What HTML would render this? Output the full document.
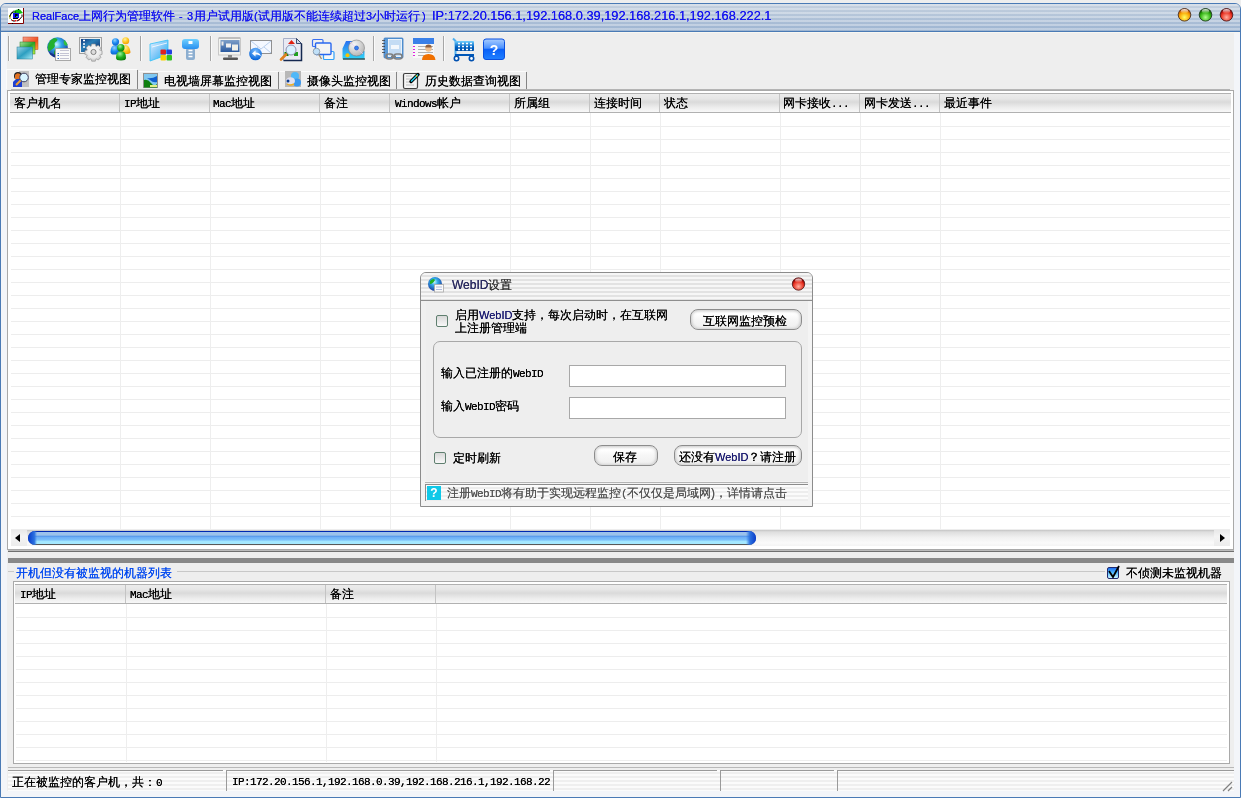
<!DOCTYPE html>
<html><head><meta charset="utf-8">
<style>
*{box-sizing:border-box;margin:0;padding:0}
html,body{width:1241px;height:798px;overflow:hidden;background:#eeeeee;font-family:"Liberation Sans",sans-serif;font-size:12px;color:#000;position:relative}
.a{position:absolute}
.sp{white-space:nowrap}
.mono{font-family:"Liberation Mono",monospace}
/* window */
#wb{left:0;top:3px;width:1241px;height:795px;border:1px solid #4a7ab5;border-radius:6px 6px 0 0;background:#eeeeee}
#title{left:1px;top:4px;width:1239px;height:27px;border-radius:5px 5px 0 0;
 background:repeating-linear-gradient(180deg,rgba(255,255,255,.32) 0 2px,rgba(255,255,255,0) 2px 4px),linear-gradient(180deg,#c6d1df,#9cb4d1)}
#tline{left:0;top:31px;width:1241px;height:1px;background:#4a7ab5}
#tline2{left:1px;top:32px;width:1239px;height:1px;background:#f8f7f2}
.strip{background:#f3f5f9}
.ttxt{left:32px;top:9px;color:#1414f0;font-size:12px;line-height:14px}
.sep{width:2px;height:25px;border-left:1px solid #a6a6a6;border-right:1px solid #fafafa}
/* tabs */
.tab{top:70px;height:20px;background:#ececec;border-top:1px solid #c0c0c0;font-size:12px;line-height:18px}
.tab .r{position:absolute;right:0;top:1px;width:3px;height:18px;border-left:1px solid #7a7a7a;border-right:1px solid #d0d0d0}
.frame{border:1px solid #a9a9a9;background:#fff}
.hdr{background:linear-gradient(180deg,#ececec 0,#e6e6e6 25%,#dadada 45%,#ededed 75%,#f8f8f8 100%);border-top:1px solid #b1b1b1;border-bottom:1px solid #b1b1b1}
.hc{position:absolute;top:0;height:18px;white-space:nowrap;line-height:18px;font-size:12px}
.hs{position:absolute;top:0;width:1px;height:18px;background:#c4c4c4}
.grid{background:repeating-linear-gradient(180deg,transparent 0 12px,#ededed 12px 13px)}
.vl{position:absolute;width:1px;background:#eeeeee}
.m{font-family:"Liberation Mono",monospace;font-size:11px;letter-spacing:-0.6px;text-shadow:0 0 .2px currentColor}
.btn{border:1px solid #8c8c8c;border-radius:8px;background:linear-gradient(180deg,#f4f4f4 0,#ffffff 20%,#f6f6f6 50%,#f2f2f2 80%,#fafafa 100%);box-shadow:inset 0 0 3px 1px rgba(0,0,0,.18)}
.sp,.hc{text-shadow:0 0 .4px currentColor}
</style></head><body><div id="root" style="position:absolute;left:0;top:0;width:1241px;height:798px;will-change:transform">
<div id="wb" class="a"></div>
<div id="title" class="a"></div>
<div id="tline" class="a"></div>
<div id="tline2" class="a"></div>
<div class="a strip" style="left:1px;top:33px;width:6px;height:764px"></div>
<div class="a strip" style="left:1234px;top:33px;width:6px;height:764px"></div>
<div class="a strip" style="left:1px;top:791px;width:1239px;height:6px"></div>

<!-- title text -->
<div class="a sp ttxt" style="left:32px"><span style="font-size:11px">RealFace</span>上网行为管理软件</div>
<div class="a sp ttxt" style="left:179px"><span style="font-size:11px">-</span></div>
<div class="a sp ttxt" style="left:187px"><span style="font-size:11px">3</span></div>
<div class="a sp ttxt" style="left:194px">用户试用版</div>
<div class="a sp ttxt" style="left:254px"><span style="font-size:11px">(</span></div>
<div class="a sp ttxt" style="left:258px">试用版不能连续超过</div>
<div class="a sp ttxt" style="left:366px"><span style="font-size:11px">3</span></div>
<div class="a sp ttxt" style="left:372px">小时运行</div>
<div class="a sp ttxt" style="left:422px"><span style="font-size:11px">)</span></div>
<div class="a sp ttxt" style="left:432px"><span style="font-size:12.8px">IP:172.20.156.1,192.168.0.39,192.168.216.1,192.168.222.1</span></div>

<!-- toolbar separators -->
<div class="a sep" style="left:8px;top:36px"></div>
<div class="a sep" style="left:140px;top:36px"></div>
<div class="a sep" style="left:210px;top:36px"></div>
<div class="a sep" style="left:373px;top:36px"></div>
<div class="a sep" style="left:443px;top:36px"></div>

<!-- tab strip line -->
<div class="a" style="left:11px;top:89px;width:1219px;height:1px;background:#b4b4b4"></div>


<!-- tabs -->
<div class="a" style="left:6px;top:69px;width:131px;height:1px;background:#fbfbfb"></div>
<div class="a" style="left:6px;top:69px;width:1px;height:20px;background:#fbfbfb"></div>
<div class="a" style="left:137px;top:70px;width:1px;height:19px;background:#858585"></div>
<div class="a" style="left:139px;top:71px;width:139px;height:1px;background:#fbfbfb"></div>
<div class="a" style="left:278px;top:72px;width:1px;height:17px;background:#858585"></div>
<div class="a" style="left:280px;top:71px;width:116px;height:1px;background:#fbfbfb"></div>
<div class="a" style="left:396px;top:72px;width:1px;height:17px;background:#858585"></div>
<div class="a" style="left:398px;top:71px;width:128px;height:1px;background:#fbfbfb"></div>
<div class="a" style="left:526px;top:72px;width:1px;height:17px;background:#858585"></div>
<div class="a sp" style="left:35px;top:72px;font-size:12px;line-height:14px">管理专家监控视图</div>
<div class="a sp" style="left:164px;top:74px;font-size:12px;line-height:14px">电视墙屏幕监控视图</div>
<div class="a sp" style="left:307px;top:74px;font-size:12px;line-height:14px">摄像头监控视图</div>
<div class="a sp" style="left:425px;top:74px;font-size:12px;line-height:14px">历史数据查询视图</div>

<!-- top list -->
<div class="a frame" style="left:7px;top:90px;width:1227px;height:460px"></div>
<div class="a hdr" style="left:10px;top:93px;width:1221px;height:20px">
 <div class="hc" style="left:4px">客户机名</div><div class="hs" style="left:109px"></div>
 <div class="hc" style="left:114px"><span class="m">IP</span>地址</div><div class="hs" style="left:199px"></div>
 <div class="hc" style="left:203px"><span class="m">Mac</span>地址</div><div class="hs" style="left:309px"></div>
 <div class="hc" style="left:314px">备注</div><div class="hs" style="left:379px"></div>
 <div class="hc" style="left:385px"><span class="m">Windows</span>帐户</div><div class="hs" style="left:499px"></div>
 <div class="hc" style="left:504px">所属组</div><div class="hs" style="left:579px"></div>
 <div class="hc" style="left:584px">连接时间</div><div class="hs" style="left:649px"></div>
 <div class="hc" style="left:654px">状态</div><div class="hs" style="left:769px"></div>
 <div class="hc" style="left:773px">网卡接收<span class="m">...</span></div><div class="hs" style="left:849px"></div>
 <div class="hc" style="left:854px">网卡发送<span class="m">...</span></div><div class="hs" style="left:929px"></div>
 <div class="hc" style="left:934px">最近事件</div>
</div>
<div class="a grid" style="left:11px;top:114px;width:1219px;height:416px"></div>
<div class="vl" style="left:120px;top:113px;height:416px"></div>
<div class="vl" style="left:210px;top:113px;height:416px"></div>
<div class="vl" style="left:320px;top:113px;height:416px"></div>
<div class="vl" style="left:390px;top:113px;height:416px"></div>
<div class="vl" style="left:510px;top:113px;height:416px"></div>
<div class="vl" style="left:590px;top:113px;height:416px"></div>
<div class="vl" style="left:660px;top:113px;height:416px"></div>
<div class="vl" style="left:780px;top:113px;height:416px"></div>
<div class="vl" style="left:860px;top:113px;height:416px"></div>
<div class="vl" style="left:940px;top:113px;height:416px"></div>

<!-- h scrollbar -->
<div class="a" style="left:11px;top:530px;width:1219px;height:16px;background:linear-gradient(180deg,#c4c4c4 0,#dedede 12%,#f0f0f0 45%,#fafafa 80%,#f4f4f4 100%)"></div>
<div class="a" style="left:11px;top:530px;width:16px;height:16px;background:linear-gradient(180deg,#e8e8e8,#f4f4f4 40%,#ececec)"></div>
<div class="a" style="left:15px;top:534px;width:0;height:0;border-top:4px solid transparent;border-bottom:4px solid transparent;border-right:5px solid #000"></div>
<div class="a" style="left:1214px;top:530px;width:16px;height:16px;background:linear-gradient(180deg,#e8e8e8,#f4f4f4 40%,#ececec)"></div>
<div class="a" style="left:1220px;top:534px;width:0;height:0;border-top:4px solid transparent;border-bottom:4px solid transparent;border-left:5px solid #000"></div>
<div class="a" style="left:28px;top:531px;width:728px;height:14px;border-radius:7px;border-top:1px solid #0028b0;border-bottom:1px solid #585858;border-left:1px solid #1040c0;border-right:1px solid #1040c0;background:linear-gradient(180deg,#9cc2ec 0,#9cc2ec 28%,#4a90e6 32%,#6eaef6 45%,#7cc0fa 65%,#a4e8ff 80%,#a4e8ff 100%)"></div>
<div class="a" style="left:28px;top:531px;width:9px;height:14px;border-radius:7px 0 0 7px;background:linear-gradient(90deg,#0a3cc8,#2a70e0 70%,rgba(80,150,240,0))"></div>
<div class="a" style="left:746px;top:531px;width:10px;height:14px;border-radius:0 7px 7px 0;background:linear-gradient(270deg,#0a3cc8,#2a70e0 60%,rgba(80,150,240,0))"></div>

<!-- splitter -->
<div class="a" style="left:8px;top:550px;width:1226px;height:1px;background:#bcbcbc"></div><div class="a" style="left:8px;top:551px;width:1226px;height:1px;background:#707070"></div>
<div class="a" style="left:8px;top:558px;width:1226px;height:5px;background:#888888"></div>

<!-- group box -->
<div class="a" style="left:8px;top:571px;width:6px;height:1px;background:#c8c8c8"></div>
<div class="a" style="left:177px;top:571px;width:928px;height:1px;background:#c8c8c8"></div>
<div class="a sp" style="left:16px;top:566px;color:#0048f0;font-size:12px;line-height:14px">开机但没有被监视的机器列表</div>
<div class="a" style="left:1107px;top:567px;width:12px;height:12px;border:1px solid #202a70;border-radius:2px;background:linear-gradient(180deg,#2070f0 0,#50b8ff 45%,#c8f4ff 100%)"></div>
<svg class="a" style="left:1105px;top:563px" width="18" height="18"><path d="M4 8l4 6l6-11" stroke="#000" stroke-width="1.8" fill="none"/></svg>
<div class="a sp" style="left:1126px;top:566px;font-size:12px;line-height:14px">不侦测未监视机器</div>

<!-- bottom list -->
<div class="a frame" style="left:13px;top:581px;width:1217px;height:183px"></div>
<div class="a hdr" style="left:15px;top:584px;width:1212px;height:20px">
 <div class="hc" style="left:5px"><span class="m">IP</span>地址</div><div class="hs" style="left:110px"></div>
 <div class="hc" style="left:115px"><span class="m">Mac</span>地址</div><div class="hs" style="left:310px"></div>
 <div class="hc" style="left:315px">备注</div><div class="hs" style="left:420px"></div>
</div>
<div class="a grid" style="left:16px;top:605px;width:1211px;height:158px"></div>
<div class="vl" style="left:126px;top:604px;height:158px"></div>
<div class="vl" style="left:326px;top:604px;height:158px"></div>
<div class="vl" style="left:436px;top:604px;height:158px"></div>

<div class="a" style="left:8px;top:767px;width:1226px;height:1px;background:#b8b8b8"></div>
<!-- status bar -->
<div class="a" style="left:8px;top:770px;width:1226px;height:21px;background:repeating-linear-gradient(180deg,#fbfbfb 0 2px,#efefef 2px 4px)"></div>
<div class="a" style="left:8px;top:770px;width:215px;height:1px;background:#9a9a9a"></div>
<div class="a" style="left:226px;top:770px;width:324px;height:1px;background:#9a9a9a"></div>
<div class="a" style="left:226px;top:770px;width:1px;height:21px;background:#9a9a9a"></div>
<div class="a" style="left:553px;top:770px;width:164px;height:1px;background:#9a9a9a"></div>
<div class="a" style="left:553px;top:770px;width:1px;height:21px;background:#9a9a9a"></div>
<div class="a" style="left:720px;top:770px;width:114px;height:1px;background:#9a9a9a"></div>
<div class="a" style="left:720px;top:770px;width:1px;height:21px;background:#9a9a9a"></div>
<div class="a" style="left:837px;top:770px;width:397px;height:1px;background:#9a9a9a"></div>
<div class="a" style="left:837px;top:770px;width:1px;height:21px;background:#9a9a9a"></div>
<div class="a sp" style="left:12px;top:775px;font-size:12px;line-height:14px">正在被监控的客户机，共：<span class="m">0</span></div>
<div class="a sp m" style="left:232px;top:775px;font-size:11px;line-height:14px">IP:172.20.156.1,192.168.0.39,192.168.216.1,192.168.22</div>
<svg class="a" style="left:1220px;top:780px" width="14" height="12"><path d="M3 11L12 2M8 11l4-4" stroke="#808080" stroke-width="1.2"/></svg>



<!-- DIALOG -->
<div class="a" style="left:420px;top:272px;width:393px;height:235px;border:1px solid #8c8c8c;border-radius:6px 6px 0 0;background:#eeeeee"></div>
<div class="a" style="left:421px;top:273px;width:391px;height:27px;border-radius:5px 5px 0 0;background:repeating-linear-gradient(180deg,#f6f6f6 0 2px,#e2e2e2 2px 4px)"></div>
<div class="a" style="left:421px;top:300px;width:391px;height:1px;background:#8e8e8e"></div>
<div class="a" style="left:808px;top:301px;width:4px;height:205px;background:#f4f4f4"></div>
<div class="a" style="left:421px;top:301px;width:5px;height:180px;background:#f0f0f0"></div>
<div class="a sp" style="left:452px;top:278px;font-size:12px;line-height:14px;color:#333"><span style="font-size:12px;color:#2a2a60">WebID</span>设置</div>
<!-- checkbox 1 -->
<div class="a" style="left:436px;top:315px;width:12px;height:12px;border:1px solid #5f7f6f;border-radius:2px;background:linear-gradient(180deg,#d8d8d8,#f8f8f8)"></div>
<div class="a sp" style="left:455px;top:309px;font-size:12px;line-height:13px">启用<span style="font-size:11px;color:#1a1a70">WebID</span>支持，每次启动时，在互联网<br>上注册管理端</div>
<!-- button 1 -->
<div class="a btn" style="left:690px;top:309px;width:112px;height:21px"></div>
<div class="a sp" style="left:703px;top:315px;font-size:12px;line-height:13px">互联网监控预检</div>
<!-- group -->
<div class="a" style="left:433px;top:341px;width:369px;height:97px;border:1px solid #a8a8a8;border-radius:7px"></div>
<div class="a sp" style="left:441px;top:366px;font-size:12px;line-height:14px">输入已注册的<span class="m" style="font-size:11px">WebID</span></div>
<div class="a" style="left:569px;top:365px;width:217px;height:22px;border:1px solid #a8a8a8;background:#fff"></div>
<div class="a sp" style="left:441px;top:399px;font-size:12px;line-height:14px">输入<span class="m" style="font-size:11px">WebID</span>密码</div>
<div class="a" style="left:569px;top:397px;width:217px;height:22px;border:1px solid #a8a8a8;background:#fff"></div>
<!-- checkbox 2 -->
<div class="a" style="left:434px;top:452px;width:12px;height:12px;border:1px solid #5f7f6f;border-radius:2px;background:linear-gradient(180deg,#d8d8d8,#f8f8f8)"></div>
<div class="a sp" style="left:453px;top:451px;font-size:12px;line-height:14px">定时刷新</div>
<div class="a btn" style="left:594px;top:445px;width:64px;height:21px"></div>
<div class="a sp" style="left:613px;top:451px;font-size:12px;line-height:13px">保存</div>
<div class="a btn" style="left:674px;top:445px;width:128px;height:21px"></div>
<div class="a sp" style="left:679px;top:451px;font-size:12px;line-height:13px">还没有<span style="font-size:11px;color:#1a1a70">WebID</span>？请注册</div>
<!-- status strip -->
<div class="a" style="left:421px;top:481px;width:391px;height:25px;background:#f3f3f3"></div>
<div class="a" style="left:425px;top:482px;width:383px;height:1px;background:#b4b4b4"></div>
<div class="a" style="left:425px;top:484px;width:383px;height:17px;border-top:1px solid #8c8c8c;border-left:1px solid #8c8c8c;background:repeating-linear-gradient(180deg,#fbfbfb 0 2px,#ededed 2px 4px)"></div>
<div class="a" style="left:427px;top:486px;width:14px;height:14px;background:#10c8e8;color:#fff;font-weight:bold;font-size:12px;line-height:14px;text-align:center">?</div>
<div class="a sp" style="left:447px;top:486px;font-size:12px;line-height:14px;color:#555">注册<span class="m" style="font-size:11px">WebID</span>将有助于实现远程监控<span class="m" style="font-size:11px">(</span>不仅仅是局域网)，详情请点击</div>

<!-- ICONS -->
<svg class="a" style="left:0;top:0" width="1241" height="100" viewBox="0 0 1241 100">
<defs>
 <linearGradient id="gR" x1="0" y1="0" x2="1" y2="1"><stop offset="0" stop-color="#f7a08a"/><stop offset=".6" stop-color="#f05020"/><stop offset="1" stop-color="#ffb030"/></linearGradient>
 <linearGradient id="gG" x1="0" y1="0" x2="1" y2="1"><stop offset="0" stop-color="#a8e0a0"/><stop offset=".5" stop-color="#2aa52a"/><stop offset="1" stop-color="#c8f040"/></linearGradient>
 <linearGradient id="gB" x1="0" y1="0" x2="1" y2="1"><stop offset="0" stop-color="#9fd4e8"/><stop offset=".5" stop-color="#2c9ec0"/><stop offset="1" stop-color="#a8ecf8"/></linearGradient>
 <radialGradient id="gGlobe" cx=".45" cy=".35" r=".7"><stop offset="0" stop-color="#c8f8ff"/><stop offset=".35" stop-color="#30a8e8"/><stop offset="1" stop-color="#1a2c90"/></radialGradient>
 <linearGradient id="gScr" x1="0" y1="0" x2="1" y2="1"><stop offset="0" stop-color="#103a80"/><stop offset=".4" stop-color="#2a80b8"/><stop offset="1" stop-color="#081e60"/></linearGradient>
 <radialGradient id="gGear" cx=".5" cy=".4" r=".6"><stop offset="0" stop-color="#ffffff"/><stop offset=".7" stop-color="#e8e8e8"/><stop offset="1" stop-color="#c0c0c0"/></radialGradient>
 <radialGradient id="pB" cx=".4" cy=".3" r=".8"><stop offset="0" stop-color="#8ad0ff"/><stop offset=".5" stop-color="#1a88f0"/><stop offset="1" stop-color="#0a58c0"/></radialGradient>
 <radialGradient id="pY" cx=".4" cy=".3" r=".8"><stop offset="0" stop-color="#fff0a0"/><stop offset=".5" stop-color="#ffc820"/><stop offset="1" stop-color="#f09000"/></radialGradient>
 <radialGradient id="pG" cx=".4" cy=".3" r=".8"><stop offset="0" stop-color="#a0f0a0"/><stop offset=".5" stop-color="#20b020"/><stop offset="1" stop-color="#087008"/></radialGradient>
 <linearGradient id="gFold" x1="0" y1="0" x2="1" y2="1"><stop offset="0" stop-color="#e8f0ff"/><stop offset=".5" stop-color="#80c8f8"/><stop offset="1" stop-color="#10b0f0"/></linearGradient>
 <linearGradient id="gUsb" x1="0" y1="0" x2="0" y2="1"><stop offset="0" stop-color="#70d0ff"/><stop offset="1" stop-color="#2890f0"/></linearGradient>
 <linearGradient id="gMon" x1="0" y1="0" x2="0" y2="1"><stop offset="0" stop-color="#7fa0c8"/><stop offset="1" stop-color="#2a5aa0"/></linearGradient>
 <radialGradient id="gRep" cx=".5" cy=".3" r=".7"><stop offset="0" stop-color="#80c0ff"/><stop offset="1" stop-color="#0060d8"/></radialGradient>
 <radialGradient id="gCD" cx=".35" cy=".3" r=".8"><stop offset="0" stop-color="#f8f8f8"/><stop offset="1" stop-color="#b0b0b0"/></radialGradient>
 <linearGradient id="gDrv" x1="0" y1="0" x2="0" y2="1"><stop offset="0" stop-color="#2a70f0"/><stop offset="1" stop-color="#30d8f8"/></linearGradient>
 <linearGradient id="gHelp" x1="0" y1="0" x2="0" y2="1"><stop offset="0" stop-color="#a8ccff"/><stop offset=".45" stop-color="#4a90ff"/><stop offset=".5" stop-color="#0a60f8"/><stop offset="1" stop-color="#2080ff"/></linearGradient>
 <linearGradient id="gCart" x1="0" y1="0" x2="0" y2="1"><stop offset="0" stop-color="#70d0ff"/><stop offset=".6" stop-color="#0060c0"/><stop offset="1" stop-color="#0050a8"/></linearGradient>
 <radialGradient id="bY" cx=".5" cy=".7" r=".6"><stop offset="0" stop-color="#ffff60"/><stop offset=".7" stop-color="#f8a000"/><stop offset="1" stop-color="#c05000"/></radialGradient>
 <radialGradient id="bG" cx=".5" cy=".7" r=".6"><stop offset="0" stop-color="#b0ff90"/><stop offset=".7" stop-color="#30b010"/><stop offset="1" stop-color="#106000"/></radialGradient>
 <radialGradient id="bRd" cx=".5" cy=".7" r=".6"><stop offset="0" stop-color="#ffb0a0"/><stop offset=".7" stop-color="#e83020"/><stop offset="1" stop-color="#900000"/></radialGradient>
 <linearGradient id="shine" x1="0" y1="0" x2="0" y2="1"><stop offset="0" stop-color="#fff" stop-opacity=".9"/><stop offset="1" stop-color="#fff" stop-opacity="0"/></linearGradient>
</defs>
<!-- app icon -->
<rect x="8" y="8" width="15" height="15" fill="#fff"/>
<path d="M23.5 8v15.5H8" stroke="#800000" stroke-width="1" fill="none"/>
<path d="M13 12.5q3-4 7-3l3 3.5-4 1z" fill="#10c010"/>
<path d="M13.5 11l1 0M18 9.5h1M15 12h1" stroke="#000" stroke-width="1"/>
<path d="M9.5 17q1-4 4-5.5" stroke="#000" stroke-width="1.2" fill="none"/>
<path d="M10 16l0 3M9 15.5h1" stroke="#a0a000" stroke-width="1"/>
<path d="M11 19.5l2 1.5h2M17 21l2-1 3-3.5v-2" stroke="#000" stroke-width="1" fill="none"/>
<path d="M12 20.5h1.5M18 20h1.5" stroke="#c00000" stroke-width="1"/>
<rect x="15" y="20" width="1.5" height="1.5" fill="#ff1010"/>
<rect x="13" y="13" width="6" height="5" fill="#1010f0"/>
<rect x="15" y="14" width="2.5" height="3" fill="#000"/>
<rect x="16" y="16" width="2" height="1" fill="#10a0a0"/>
<path d="M13 18.5h5" stroke="#000" stroke-width="1"/>
<rect x="12" y="23" width="1" height="1" fill="#000"/>
<!-- window buttons -->
<circle cx="1184.5" cy="14.8" r="6.3" fill="url(#bY)" stroke="#4a3020" stroke-width=".9"/>
<ellipse cx="1184.5" cy="11.2" rx="3.6" ry="2.2" fill="url(#shine)"/>
<circle cx="1205.5" cy="14.8" r="6.3" fill="url(#bG)" stroke="#203a20" stroke-width=".9"/>
<ellipse cx="1205.5" cy="11.2" rx="3.6" ry="2.2" fill="url(#shine)"/>
<circle cx="1226.5" cy="14.8" r="6.3" fill="url(#bRd)" stroke="#4a1a1a" stroke-width=".9"/>
<ellipse cx="1226.5" cy="11.2" rx="3.6" ry="2.2" fill="url(#shine)"/>

<!-- 1 stacked windows -->
<rect x="23" y="37" width="15" height="12.5" fill="url(#gR)" stroke="#c04020" stroke-width=".5"/>
<rect x="20" y="42" width="15" height="12" fill="url(#gG)" stroke="#208020" stroke-width=".5"/>
<rect x="17" y="47" width="15.5" height="12" fill="url(#gB)" stroke="#207890" stroke-width=".5"/>
<!-- 2 globe + doc -->
<circle cx="57.5" cy="47.5" r="10.3" fill="url(#gGlobe)"/>
<path d="M48.5 44c1-3 3-5 6-6c2 0 3 1 3 2c-1 2-3 2-3 4c1 2 0 4-2 5c-2 1-3 3-4 2c-1-2-1-5 0-7z" fill="#22b030"/>
<path d="M55 50c2-1 4 0 5 2c1 2 0 4-2 5c-2 0-4-1-4-3c0-2 0-3 1-4z" fill="#1a9a28"/>
<path d="M64 40c2 1 3 3 3.5 5c-1 1-2 1-3 0c-1-1-1-3-.5-5z" fill="#30c040"/>
<path d="M49 52a10.3 10.3 0 0 0 8 6l-1-3c-3-1-5-2-7-3z" fill="#142a80" opacity=".8"/>
<rect x="55.5" y="48.5" width="15" height="12" fill="#fafafa" stroke="#a8a8a8" stroke-width="1"/>
<path d="M60 50.5h9M60 53.5h9M60 55.5h9M60 58.5h9" stroke="#c4c4d4" stroke-width="1"/>
<path d="M57.5 53.5h1.5M57.5 55.5h1.5M57.5 58.5h1.5" stroke="#3070d0" stroke-width="1"/>
<!-- 3 monitor gear -->
<rect x="79.5" y="37.5" width="22" height="16" fill="#f0f0f0" stroke="#a0a0a0" stroke-width="1"/>
<rect x="81" y="39" width="19" height="13" fill="url(#gScr)"/>
<path d="M83 40.5h2M83 44h2M83 47h2" stroke="#fff" stroke-width="1.4"/>
<g transform="translate(93.5 52)">
<path d="M-1.8-8h3.6l.7 2.4 2.3-1.2 2.6 2.6-1.2 2.3 2.4.7v3.6l-2.4.7 1.2 2.3-2.6 2.6-2.3-1.2-.7 2.4h-3.6l-.7-2.4-2.3 1.2-2.6-2.6 1.2-2.3-2.4-.7v-3.6l2.4-.7-1.2-2.3 2.6-2.6 2.3 1.2z" fill="url(#gGear)" stroke="#909090" stroke-width=".6"/>
<circle r="2.6" fill="#dcdcdc" stroke="#6a6a6a" stroke-width=".8"/>
</g>
<!-- 4 people -->
<path d="M121.5 52q0-7 4-7t5 7q0 2-4.5 2t-4.5-2z" fill="url(#pY)"/><circle cx="125.7" cy="40.8" r="3.5" fill="url(#pY)"/>
<path d="M110.5 52q0-7 5-7t4.5 7q0 2-4.7 2.5t-4.8-2.5z" fill="url(#pB)"/><circle cx="115.5" cy="41.8" r="3.6" fill="url(#pB)"/>
<path d="M116 58q0-7 5-7t5 7q0 2.5-5 2.5t-5-2.5z" fill="url(#pG)"/><circle cx="120.8" cy="47.8" r="3.7" fill="url(#pG)"/>
<!-- 5 folder + win -->
<path d="M150 44l18-4v12l-4 4-14 5z" fill="url(#gFold)" stroke="#30c0f8" stroke-width=".8"/>
<path d="M152 47l15-4" stroke="#fff" stroke-width="1" opacity=".8"/>
<rect x="160.5" y="49.5" width="5.5" height="5" rx="1" fill="#e02020"/><rect x="166.5" y="49.5" width="5.5" height="5" rx="1" fill="#2040e0"/>
<rect x="160.5" y="55" width="5.5" height="5.5" rx="1" fill="#f8d000"/><rect x="166.5" y="55" width="5.5" height="5.5" rx="1" fill="#30c020"/>
<!-- 6 usb -->
<rect x="186" y="48" width="9" height="12" rx="2" fill="#8caed0"/>
<path d="M188.5 50.5h4M188.5 53.5h4M188.5 56.5h4" stroke="#fff" stroke-width="1.5"/>
<rect x="182" y="39" width="17" height="10" rx="3" fill="url(#gUsb)"/>
<rect x="188.5" y="41" width="4" height="3" fill="#fff"/>
<!-- 7 monitor -->
<rect x="218.5" y="38" width="22" height="17" fill="#f4f4f0" stroke="#c8c8c8" stroke-width="1"/>
<path d="M219 38h21" stroke="#a0a0a0"/>
<rect x="220.5" y="40" width="19" height="12" fill="url(#gMon)"/>
<rect x="221.5" y="41.5" width="2" height="4" fill="#e8e8e8"/><rect x="226" y="43.5" width="5" height="4" fill="#f0f0f0"/><rect x="232" y="44.5" width="6" height="6" fill="#f0f0e8"/>
<rect x="228" y="55" width="4" height="2.5" fill="#888"/><rect x="223" y="57.5" width="15" height="2.5" rx="1" fill="#555"/>
<!-- 8 mail reply -->
<rect x="250.5" y="40.5" width="21" height="13" fill="#f4f8ff" stroke="#909090" stroke-width="1"/>
<path d="M251 41l10 8 10-8M251 53l7-6M271 53l-7-6" stroke="#a8c4e8" stroke-width=".8" fill="none"/>
<circle cx="255.5" cy="54" r="6.3" fill="url(#gRep)"/>
<path d="M252 53.5l3.5-3v2c3 0 5 1.5 5.5 4c-1.5-1.5-3-2-5.5-2v2z" fill="#fff"/>
<!-- 9 doc magnifier -->
<path d="M283.5 38.5h13l5 5v17h-18z" fill="#e8eaf4" stroke="#a8b0c8" stroke-width="1"/>
<path d="M301.5 43.5v17h-18" stroke="#142850" stroke-width="1.5" fill="none"/><path d="M296.5 38.5l5 5h-5z" fill="#d0d8e8" stroke="#142850" stroke-width=".8"/>
<path d="M288 44l3.5-4 3.5 4z" fill="#e02010"/>
<rect x="284.5" y="52" width="4" height="4" fill="#108010"/><rect x="294" y="52" width="4" height="4" fill="#20a020"/>
<circle cx="291" cy="50" r="5" fill="#d8f0ff" stroke="#9090b0" stroke-width="1"/>
<path d="M281 59.5l5-5" stroke="#e08020" stroke-width="2.6" stroke-linecap="round"/>
<!-- 10 windows search -->
<rect x="312.5" y="39.5" width="10.5" height="7" rx="1" fill="#f0f0f0" stroke="#3a70f0" stroke-width="1.2"/>
<rect x="323.5" y="51.5" width="10.5" height="8" rx="1" fill="#f8f8f8" stroke="#30a0f8" stroke-width="1.2"/>
<rect x="315.5" y="43" width="15.5" height="11.5" rx="1" fill="#f4f4f4" stroke="#2a68f0" stroke-width="1.4"/>
<path d="M318 53l3.5 6" stroke="#a09070" stroke-width="1.4"/>
<circle cx="316.5" cy="51.5" r="3.3" fill="#c0e0f8" stroke="#8090a0" stroke-width=".8"/>
<!-- 11 disk -->
<path d="M346 41h8v10h10.5v7.5q0 1-1 1h-20q-1 0-1-1v-10z" fill="url(#gDrv)"/>
<path d="M343 59h22" stroke="#303030" stroke-width="1.2"/>
<circle cx="356.5" cy="48" r="8" fill="url(#gCD)" stroke="#808080" stroke-width=".6"/>
<path d="M350 42l13 12" stroke="#e8c8f0" stroke-width=".8"/>
<circle cx="356.5" cy="48" r="2" fill="#3a80f0" stroke="#1a50c0" stroke-width=".6"/>
<circle cx="347.5" cy="55.3" r="2" fill="#f8c000"/>
<!-- 12 book link -->
<rect x="384" y="38" width="19" height="20" rx="1" fill="#5a9ad8" stroke="#3a78c0" stroke-width=".8"/>
<rect x="388.5" y="39.5" width="13" height="17" fill="#c4dcf4" stroke="#fff" stroke-width=".8"/>
<rect x="391" y="45" width="8" height="4" fill="#f4f8fc"/>
<path d="M382 40.5h3M382 43.5h3M382 46.5h3M382 49.5h3M382 52.5h3" stroke="#404040" stroke-width=".8"/>
<rect x="386" y="54" width="7" height="5" rx="2.5" fill="none" stroke="#808080" stroke-width="1.6"/>
<rect x="394" y="54" width="8" height="5" rx="2.5" fill="none" stroke="#808080" stroke-width="1.6"/>
<path d="M391 56.5h5" stroke="#808080" stroke-width="1.6"/>
<!-- 13 list person -->
<rect x="413" y="38" width="21" height="20" fill="#f8f8f8"/>
<rect x="413" y="38" width="21" height="6" fill="#3a80e8"/>
<path d="M418 46.5h15M418 49.5h15M418 52.5h15M418 55.5h15" stroke="#a8a8a8" stroke-width=".9"/>
<path d="M413 46.5h2M413 49.5h2M413 52.5h2M413 55.5h2" stroke="#e020e0" stroke-width="1"/>
<circle cx="428.5" cy="48.5" r="3.2" fill="#f0c090"/><path d="M425.3 47.5a3.2 3 0 0 1 6.4 0z" fill="#906040"/>
<path d="M422 60q0-6 6.5-6t7 6z" fill="#f07000"/>
<!-- 14 cart -->
<path d="M453 38.5l2.5 2.5v18" stroke="#50b0f0" stroke-width="2" fill="none"/>
<rect x="455" y="41" width="19" height="10" rx="1" fill="url(#gCart)"/>
<path d="M458 43.5h2M462 43.5h2M466 43.5h2M470 43.5h2M458 46.5h2M462 46.5h2M466 46.5h2M470 46.5h2M458 49.5h2M462 49.5h2M466 49.5h2M470 49.5h2" stroke="#fff" stroke-width="1.6"/>
<rect x="455" y="54" width="19" height="2" fill="#0058b8"/>
<circle cx="456.5" cy="58.5" r="2.2" fill="#fff" stroke="#0050b0" stroke-width="1.6"/><circle cx="471.5" cy="58.5" r="2.2" fill="#fff" stroke="#0050b0" stroke-width="1.6"/>
<!-- 15 help -->
<rect x="483.5" y="39" width="21" height="20.5" rx="2.5" fill="url(#gHelp)" stroke="#0a50e0" stroke-width="1"/>
<text x="494" y="55" text-anchor="middle" font-family="Liberation Sans" font-weight="bold" font-size="14" fill="#fff">?</text>

<!-- tab icons -->
<rect x="19" y="71" width="10" height="16" fill="#c0c0c0"/>
<circle cx="18" cy="76" r="4" fill="#202020"/><path d="M15 75q2-3 5-1v5h-5z" fill="#e07020"/>
<path d="M13 87v-5q2-3 6-3l3 2v6z" fill="#2040d0"/>
<path d="M16 85l5-5" stroke="#f0a030" stroke-width="2"/>
<circle cx="24" cy="77.5" r="4.3" fill="#d8f4ff" stroke="#404060" stroke-width="1"/>
<rect x="143.5" y="73.5" width="14" height="14" fill="#80c8f0" stroke="#909090"/>
<path d="M144 80q4-1 7 3t6 1v3.5h-13z" fill="#108010"/><path d="M147 78q5 1 10-2v6q-4 1-7-2z" fill="#1060d0"/><path d="M150 85h7v2h-7z" fill="#e0f080"/>
<rect x="285" y="71" width="16" height="16" fill="#b8b8b8"/>
<circle cx="295" cy="76" r="4" fill="#50b8f8"/><circle cx="297" cy="82.5" r="4" fill="#3a98f0"/>
<ellipse cx="290.5" cy="81" rx="4.5" ry="3.8" fill="#e0e0f0"/><circle cx="288" cy="81" r="1.5" fill="#0a3a8a"/>
<path d="M287 84q3 2 7 0" stroke="#f0b020" stroke-width="1.5" fill="none"/>
<rect x="403.5" y="73.5" width="14" height="15" rx="1.5" fill="#f4f4f4" stroke="#404040" stroke-width="1.2"/>
<path d="M406 76h6M406 79h5M406 82h4M406 85h8" stroke="#b0b0b0" stroke-width=".8"/>
<path d="M411 81.5l7-7" stroke="#000" stroke-width="3.4" stroke-linecap="round"/><path d="M411 81.5l7-7" stroke="#20d0f0" stroke-width="1.6"/><path d="M416 76.5l1-1" stroke="#f0c000" stroke-width="1.6"/>
</svg>

<svg class="a" style="left:0;top:0" width="1241" height="798" viewBox="0 0 1241 798">
<defs>
 <radialGradient id="gGlobe2" cx=".45" cy=".35" r=".7"><stop offset="0" stop-color="#c8f8ff"/><stop offset=".35" stop-color="#30a8e8"/><stop offset="1" stop-color="#1a2c90"/></radialGradient>
 <radialGradient id="bRd2" cx=".5" cy=".7" r=".6"><stop offset="0" stop-color="#ffb0a0"/><stop offset=".7" stop-color="#e83020"/><stop offset="1" stop-color="#900000"/></radialGradient>
 <linearGradient id="shine2" x1="0" y1="0" x2="0" y2="1"><stop offset="0" stop-color="#fff" stop-opacity=".9"/><stop offset="1" stop-color="#fff" stop-opacity="0"/></linearGradient>
</defs>
<circle cx="435" cy="284" r="7" fill="url(#gGlobe2)"/>
<path d="M430 281c2-2 4-3 5-1c-1 2-3 4-5 4z" fill="#20b020"/>
<rect x="434.5" y="284.5" width="9" height="7.5" fill="#fafafa" stroke="#a8a8a8" stroke-width=".8"/>
<path d="M436 287h6M436 289.5h6" stroke="#90a0d0" stroke-width=".7"/>
<circle cx="798.5" cy="284" r="6.2" fill="url(#bRd2)" stroke="#5a2020" stroke-width=".9"/>
<ellipse cx="798.5" cy="280.5" rx="3.5" ry="2.1" fill="url(#shine2)"/>
</svg>
</div></body></html>
